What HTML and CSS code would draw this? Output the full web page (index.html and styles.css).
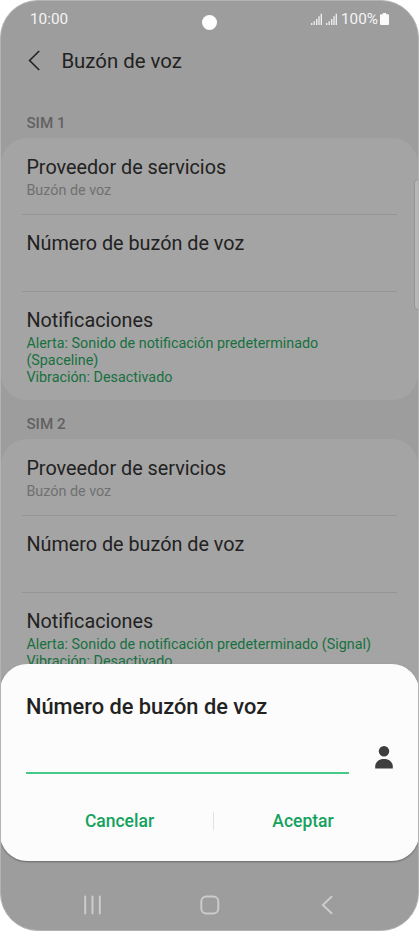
FILE: index.html
```html
<!DOCTYPE html>
<html lang="es">

<head>
  <meta charset="UTF-8">
  <meta name="viewport" content="width=device-width, initial-scale=1.0">
  <title>Buzón de voz</title>
  <link rel="stylesheet" href="styles.css">
</head>

<body>
  <div class="phone">
    <div class="status-bar">
      <span class="time">10:00</span>
      <div class="status-right">
        <svg class="signal" width="11" height="12" viewBox="0 0 11 12">
          <path d="M.7 10v2M3.2 8.2V12M5.7 6V12M8 3.2V12M10.3.8V12" stroke="#f2f2f2" stroke-width="1.3"/>
        </svg>
        <svg class="signal" width="11" height="12" viewBox="0 0 11 12">
          <path d="M.7 10v2M3.2 8.2V12M5.7 6V12M8 3.2V12M10.3.8V12" stroke="#f2f2f2" stroke-width="1.3"/>
        </svg>
        <span class="percent">100%</span>
        <svg class="battery" width="9" height="12" viewBox="0 0 9 12">
          <path d="M2.8 0h3.4v1.2H8q1 0 1 1V11q0 1-1 1H1q-1 0-1-1V2.2q0-1 1-1h1.8z" fill="#fafafa"/>
        </svg>
      </div>
    </div>
    <div class="camera"></div>

    <header class="header">
      <svg class="back" width="12" height="21" viewBox="0 0 12 21">
        <path d="M11.2 1L1.6 10.5L11.2 20" fill="none" stroke="#222" stroke-width="1.6"/>
      </svg>
      <h1>Buzón de voz</h1>
    </header>

    <h2 class="sim">SIM 1</h2>
    <ul class="card">
      <li class="row">
        <p class="title">Proveedor de servicios</p>
        <p class="sub">Buzón de voz</p>
      </li>
      <li class="row">
        <p class="title">Número de buzón de voz</p>
      </li>
      <li class="row last">
        <p class="title">Notificaciones</p>
        <p class="sub green">Alerta: Sonido de notificación predeterminado<br>(Spaceline)<br>Vibración: Desactivado</p>
      </li>
    </ul>

    <h2 class="sim second">SIM 2</h2>
    <ul class="card">
      <li class="row">
        <p class="title">Proveedor de servicios</p>
        <p class="sub">Buzón de voz</p>
      </li>
      <li class="row">
        <p class="title">Número de buzón de voz</p>
      </li>
      <li class="row last">
        <p class="title">Notificaciones</p>
        <p class="sub green">Alerta: Sonido de notificación predeterminado (Signal)<br>Vibración: Desactivado</p>
      </li>
    </ul>

    <div class="edge-panel"></div>

    <div class="dialog">
      <h3>Número de buzón de voz</h3>
      <div class="field">
        <div class="input"></div>
        <svg class="contact" width="18" height="23" viewBox="0 0 18 23">
          <circle cx="9" cy="5.3" r="5.2" fill="#3e3e3e"/>
          <path d="M.2 22.5V20.5C.2 16 4 13 9 13S17.8 16 17.8 20.5V22.5z" fill="#3e3e3e"/>
        </svg>
      </div>
      <div class="buttons">
        <button class="button cancel">Cancelar</button>
        <span class="separator"></span>
        <button class="button accept">Aceptar</button>
      </div>
    </div>

    <nav class="nav-bar">
      <svg width="18" height="20" viewBox="0 0 18 20">
        <path d="M1.2 1.5v17M8.5 1.5v17M15.8 1.5v17" stroke="#ccc" stroke-width="2" stroke-linecap="round"/>
      </svg>
      <svg width="20" height="20" viewBox="0 0 20 20">
        <rect x="1.3" y="1.5" width="17" height="17" rx="5" fill="none" stroke="#ccc" stroke-width="1.9"/>
      </svg>
      <svg width="12" height="20" viewBox="0 0 12 20">
        <path d="M10.5 1.8L1.9 10L10.5 18.2" fill="none" stroke="#ccc" stroke-width="2" stroke-linecap="round"/>
      </svg>
    </nav>
  </div>
</body>

</html>
```

FILE: styles.css
```css
* {
  box-sizing: border-box;
}

body {
  margin: 0;
  background-color: white;
  font-family: Roboto, sans-serif;
  color: #222;
}

h1, h2, h3, p, ul {
  margin: 0;
  padding: 0;
  font-weight: 400;
}

/* Phone screen */
.phone {
  position: relative;
  width: 419px;
  height: 931px;
  overflow: hidden;
  background-color: #9d9d9d;
  border: 1px solid #b3b3b3;
  border-radius: 38px;
}

.status-bar {
  display: flex;
  justify-content: space-between;
  align-items: center;
  height: 36px;
  padding: 0 29px 0 29px;
  color: #f4f4f4;
  font-size: 15.3px;
}

.status-right {
  display: flex;
  align-items: center;
}

.signal {
  margin-right: 4px;
}

.signal + .signal {
  margin-right: 3px;
}

.percent {
  margin-left: 1px;
  margin-right: 2px;
}

.signal,
.battery {
  margin-bottom: 1px;
}

.camera {
  position: absolute;
  top: 14px;
  left: 201px;
  width: 15px;
  height: 15px;
  border-radius: 50%;
  background-color: white;
}

.header {
  display: flex;
  align-items: center;
  height: 46px;
  padding-left: 27px;
}

.header h1 {
  margin-left: 21.4px;
  padding-top: 1px;
  font-size: 20.4px;
}

.sim {
  height: 55px;
  padding: 31px 0 0 25.4px;
  color: #626262;
  font-size: 15.2px;
  font-weight: 500;
  line-height: 18px;
}

.sim.second {
  height: 39px;
  padding-top: 15px;
}

/* Settings list */
.card {
  list-style: none;
  background-color: #a4a4a4;
  border-radius: 26px;
}

.row {
  position: relative;
  height: 77px;
  padding: 18px 0 0 25.4px;
}

.row::after {
  content: "";
  display: block;
  position: absolute;
  left: 21px;
  right: 21px;
  bottom: 0;
  height: 1px;
  background-color: #949494;
}

.row + .row {
  padding-top: 17px;
}

.row.last {
  height: 108px;
}

.row.last::after {
  display: none;
}

.title {
  font-size: 19.8px;
  line-height: 24px;
}

.sub {
  margin-top: 3px;
  color: #707070;
  font-size: 14.35px;
  line-height: 16.8px;
}

.green {
  color: #17703f;
}

.edge-panel {
  position: absolute;
  top: 178px;
  right: -4px;
  width: 8px;
  height: 131px;
  background-color: #b7b7b7;
  border: 1px solid #949494;
  border-radius: 4px;
}

/* Voicemail number dialog */
.dialog {
  position: absolute;
  top: 663px;
  left: -1px;
  width: 419px;
  height: 197px;
  padding: 30px 26px 0;
  background-color: #fcfcfc;
  border-radius: 27px;
  box-shadow: 0 1px 2px rgba(0, 0, 0, 0.35);
}

.dialog h3 {
  font-size: 21.8px;
  font-weight: 500;
  line-height: 26px;
}

.field {
  display: flex;
  align-items: flex-start;
  margin-top: 25px;
}

.input {
  width: 323px;
  height: 29px;
  border-bottom: 2px solid #42ca86;
}

.contact {
  margin-top: 1px;
  margin-left: 26px;
}

.buttons {
  display: flex;
  align-items: center;
  height: 40px;
  margin-top: 27px;
}

.button {
  padding: 0;
  border: none;
  background: none;
  color: #15a25f;
  font-family: inherit;
  font-size: 17.5px;
  font-weight: 500;
}

.button.cancel {
  width: 187px;
}

.button.accept {
  width: 178px;
}

.separator {
  width: 1px;
  height: 18px;
  margin-bottom: 1px;
  background-color: #e2e2e2;
}

.nav-bar {
  position: absolute;
  left: 0;
  right: 0;
  bottom: 15px;
  display: grid;
  grid-template-columns: repeat(3, 117px);
  justify-content: center;
  justify-items: center;
}
```
